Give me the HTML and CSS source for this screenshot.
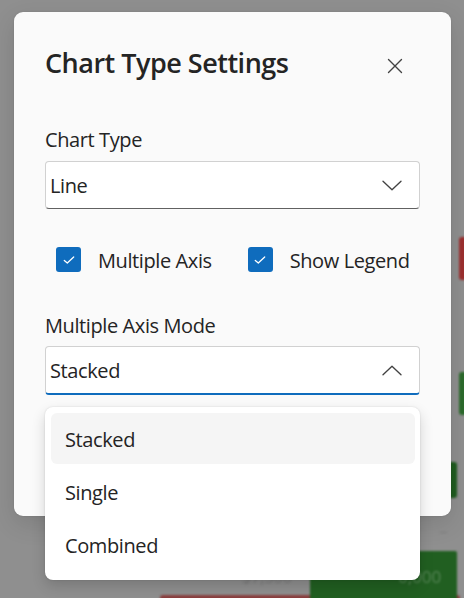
FILE: index.html
```html
<!DOCTYPE html>
<html lang="en">
<head>
<meta charset="utf-8">
<title>Chart Type Settings</title>
<link rel="stylesheet" href="styles.css">
</head>
<body>
<div class="backdrop" aria-hidden="true">
  <div class="frag frag-red1"></div>
  <div class="frag frag-green1"></div>
  <div class="frag frag-green2"></div>
  <div class="frag frag-red2"></div>
  <div class="frag frag-green3"><span class="frag-num">0,000</span></div>
  <span class="frag-text">$7,500</span>
  <div class="frag frag-dash"></div>
</div>

<div class="dialog" role="dialog" aria-labelledby="dlg-title">
  <div class="dialog-header">
    <h2 class="title" id="dlg-title">Chart Type Settings</h2>
    <button class="close" aria-label="Close">
      <svg width="16" height="16" viewBox="0 0 16 16"><path d="M1.5 1.5 L14.5 14.5 M14.5 1.5 L1.5 14.5" fill="none" stroke="#424242" stroke-width="1.35" stroke-linecap="round"/></svg>
    </button>
  </div>

  <div class="field field-first">
    <label class="label">Chart Type</label>
    <div class="select">
      <span class="select-value">Line</span>
      <svg class="chev" width="20" height="11" viewBox="0 0 20 11"><path d="M1 1.2 L10 9.8 L19 1.2" fill="none" stroke="#424242" stroke-width="1.35" stroke-linecap="round" stroke-linejoin="round"/></svg>
    </div>
  </div>

  <div class="checks">
    <label class="check">
      <span class="box"><svg width="12" height="12" viewBox="0 0 12 12"><path d="M1.3 6.4 L4.3 9 L10.7 3" fill="none" stroke="#fff" stroke-width="1.3" stroke-linecap="round" stroke-linejoin="round"/></svg></span>
      <span class="check-text">Multiple Axis</span>
    </label>
    <label class="check">
      <span class="box"><svg width="12" height="12" viewBox="0 0 12 12"><path d="M1.3 6.4 L4.3 9 L10.7 3" fill="none" stroke="#fff" stroke-width="1.3" stroke-linecap="round" stroke-linejoin="round"/></svg></span>
      <span class="check-text">Show Legend</span>
    </label>
  </div>

  <div class="field field-second">
    <label class="label">Multiple Axis Mode</label>
    <div class="select-wrap">
      <div class="select select-open">
        <span class="select-value">Stacked</span>
        <svg class="chev" width="20" height="11" viewBox="0 0 20 11"><path d="M1 9.8 L10 1.2 L19 9.8" fill="none" stroke="#424242" stroke-width="1.35" stroke-linecap="round" stroke-linejoin="round"/></svg>
      </div>
      <div class="listbox" role="listbox">
        <div class="option option-active" role="option">Stacked</div>
        <div class="option" role="option">Single</div>
        <div class="option" role="option">Combined</div>
      </div>
    </div>
  </div>
</div>
</body>
</html>
```

FILE: styles.css
```css
* { box-sizing: border-box; }

html, body { margin: 0; }

body {
  width: 464px;
  height: 598px;
  overflow: hidden;
  position: relative;
  background: #8f8f8f;
  padding: 12px 0 0 14px;
  font-family: "Open Sans", "Noto Sans", sans-serif;
  color: #242424;
}

/* blurred app behind the modal */
.backdrop {
  position: absolute;
  inset: 0;
  filter: blur(1.2px);
}
.frag { position: absolute; border-radius: 3px; }
.frag-red1 { left: 459px; top: 237px; width: 12px; height: 43px; background: #9c2f2f; }
.frag-green1 { left: 459px; top: 372px; width: 12px; height: 43px; background: #2c6b2c; }
.frag-green2 { left: 440px; top: 462px; width: 17px; height: 36px; background: #1f5c1f; }
.frag-red2 { left: 160px; top: 595px; width: 300px; height: 8px; background: #8a3f3f; }
.frag-green3 {
  left: 310px; top: 551px; width: 147px; height: 60px; background: #215f21;
  border-radius: 2px;
}
.frag-num {
  position: absolute; left: 88px; top: 14px;
  font-size: 17px; color: rgba(255,255,255,0.22);
}
.frag-text {
  position: absolute; left: 242px; top: 566px;
  font-size: 16px; color: #7c7c7c;
}
.frag-dash { left: 440px; top: 532px; width: 7px; height: 1px; background: #7e7e7e; }

/* dialog */
.dialog {
  position: relative;
  z-index: 1;
  width: 437px;
  height: 504px;
  background: #fafafa;
  border-radius: 9px;
  padding: 32px 31px;
  box-shadow: 0 0 2px rgba(0,0,0,0.12), 0 8px 24px rgba(0,0,0,0.12);
}

.dialog-header {
  display: flex;
  justify-content: space-between;
  align-items: flex-start;
}

.title {
  margin: 0;
  font-size: 27px;
  line-height: 37px;
  font-weight: 600;
  letter-spacing: -0.5px;
  white-space: nowrap;
}

.close {
  width: 32px;
  height: 32px;
  margin: 6px 9px 0 0;
  padding: 0;
  border: 0;
  background: transparent;
  display: flex;
  align-items: center;
  justify-content: center;
}

.field { display: flex; flex-direction: column; gap: 8px; }
.field-first { margin-top: 44px; }
.field-second { margin-top: 38px; gap: 7px; }

.label, .check-text, .select-value, .option {
  font-size: 20px;
  line-height: 27px;
  letter-spacing: -0.4px;
  white-space: nowrap;
}

.select {
  height: 48px;
  background: #fff;
  border: 1px solid #d1d1d1;
  border-bottom-color: #616161;
  border-radius: 4px;
  padding: 1px 17px 0 4px;
  display: flex;
  align-items: center;
  justify-content: space-between;
}
.select-open {
  height: 49px;
  border-bottom: 2px solid #0f6cbd;
}

.select-wrap { position: relative; }

.listbox {
  position: absolute;
  left: 0;
  right: 0;
  top: calc(100% + 12px);
  background: #fff;
  border-radius: 8px;
  padding: 6px 5px 10px 6px;
  display: flex;
  flex-direction: column;
  gap: 2px;
  box-shadow: 0 0 2px rgba(0,0,0,0.14), 0 6px 14px rgba(0,0,0,0.16);
}
.option {
  height: 51px;
  padding: 2px 0 0 14px;
  display: flex;
  align-items: center;
  border-radius: 6px;
}
.option-active { background: #f5f5f5; }

/* checkboxes */
.checks {
  display: flex;
  gap: 14px;
  margin-top: 36px;
}
.check {
  flex-shrink: 0;
  display: flex;
  align-items: center;
  gap: 17px;
  padding: 0 11px;
}
.box {
  flex-shrink: 0;
  width: 25px;
  height: 25px;
  border-radius: 3px;
  background: #0f6cbd;
  display: flex;
  align-items: center;
  justify-content: center;
}
.check-text { padding-top: 2px; }
```
